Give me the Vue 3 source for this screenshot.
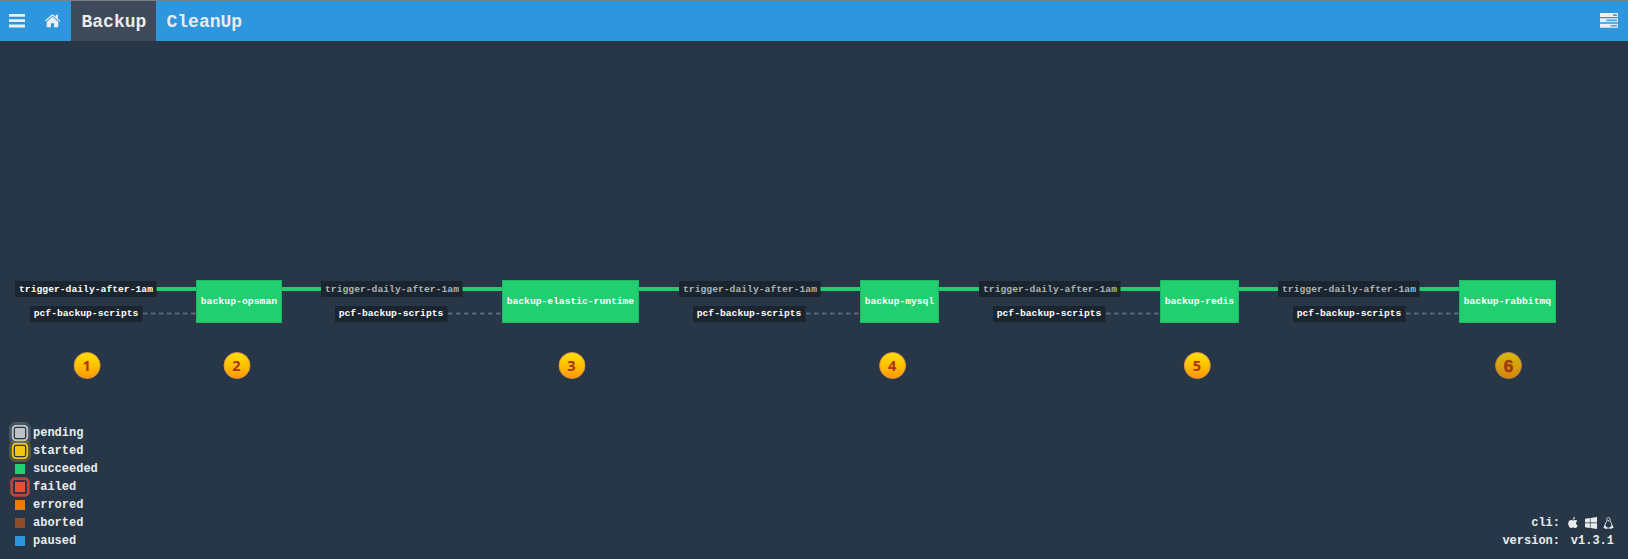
<script setup>
const jobs = [
  { name: 'backup-opsman', x: 196, w: 86, trig: 15, pcf: 30, badge: 87.3 },
  { name: 'backup-elastic-runtime', x: 502, w: 137, trig: 321, pcf: 335 },
  { name: 'backup-mysql', x: 860, w: 79, trig: 679, pcf: 693 },
  { name: 'backup-redis', x: 1160, w: 79, trig: 979, pcf: 993 },
  { name: 'backup-rabbitmq', x: 1459, w: 97, trig: 1278, pcf: 1293 },
]
const badges = [87.1, 237, 572, 892.6, 1197.3, 1508.5]
const statuses = [
  { name: 'pending', color: '#bdc3c7', ring: true },
  { name: 'started', color: '#f1c40f', ring: true },
  { name: 'succeeded', color: '#22cf70' },
  { name: 'failed', color: '#ee4c36', glow: true },
  { name: 'errored', color: '#e77e05' },
  { name: 'aborted', color: '#904d2b' },
  { name: 'paused', color: '#2e96dd' },
]
</script>

<template>
  <div class="page">
    <header class="bar">
      <button class="icon menu" aria-label="Menu">
        <svg width="16" height="14" viewBox="0 0 16 14"><path d="M0 0h16v2.8H0zM0 5.3h16v2.8H0zM0 10.6h16v2.8H0z" /></svg>
      </button>
      <a class="icon home">
        <svg width="17" height="14" viewBox="0 0 17 14">
          <path d="M8.5 2.8 2.7 7.7V12.4c0 .5.3.8.8.8h3.4V9.3h3.1v3.9h3.5c.5 0 .8-.3.8-.8V7.7z" />
          <path d="M16.3 6.7 13.9 4.7V.7h-2.2v2.1L9.3.8c-.5-.4-1.2-.4-1.7 0L.6 6.7l.8.9 7.1-5.9 7.1 5.9z" />
        </svg>
      </a>
      <a class="tab active">Backup</a>
      <a class="tab">CleanUp</a>
      <a class="icon groups">
        <svg width="18" height="15" viewBox="0 0 18 15">
          <path d="M0 0h18v4H0zM0 5.3h18v4H0zM0 10.7h18v4H0z" />
          <path class="slot" d="M13 1.2h4v1.7h-4zM6.5 6.5H17v1.7H6.5zM10.5 11.9H17v1.7h-6.5z" />
        </svg>
      </a>
    </header>

    <svg class="pipeline" width="1628" height="350" viewBox="0 41 1628 350">
      <defs>
        <linearGradient id="gold" x1="0" y1="0" x2="0" y2="1">
          <stop offset="0" stop-color="#ffe000" />
          <stop offset=".5" stop-color="#ffc000" />
          <stop offset="1" stop-color="#ff9500" />
        </linearGradient>
        <linearGradient id="dim" x1="0" y1="0" x2="0" y2="1">
          <stop offset="0" stop-color="#d7bd0c" />
          <stop offset="1" stop-color="#d5810f" />
        </linearGradient>
      </defs>
      <g v-for="(j, i) in jobs" :key="j.name">
        <path v-if="i" class="flow" :d="`M${jobs[i - 1].x + jobs[i - 1].w} 289H${j.trig}`" />
        <path class="flow" :d="`M${j.trig + 141} 289H${j.x}`" />
        <path class="idle" :d="`M${j.pcf + 112} 313.5H${j.x}`" />
        <rect class="resource" :x="j.trig" y="281" width="141.5" height="16" />
        <text :class="['label', { passed: i > 0 }]" :x="j.trig + 4" y="292" textLength="134">trigger-daily-after-1am</text>
        <rect class="resource" :x="j.pcf" y="306" width="112.5" height="16" />
        <text class="label" :x="j.pcf + 3.7" y="316" textLength="104.7">pcf-backup-scripts</text>
        <rect class="job" :x="j.x + .5" y="280.5" :width="j.w - 1" height="42" />
        <text class="label" :x="j.x + 4.7" y="304" :textLength="j.w - 9.5">{{ j.name }}</text>
      </g>
      <g v-for="(x, i) in badges" :key="x" :class="['badge', { last: i === 5 }]">
        <circle :cx="x" cy="365.5" r="13" />
        <text :x="i === 5 ? x : x - .5" :y="i === 5 ? 372 : 370.8">{{ i + 1 }}</text>
      </g>
    </svg>

    <footer class="foot">
      <ul class="legend">
        <li v-for="s in statuses" :key="s.name">
          <svg class="swatch" width="24" height="18" viewBox="-12 -9 24 18" fill="none" :stroke="s.color">
            <template v-if="s.ring">
              <rect x="-10" y="-10" width="20" height="20" rx="5.5" stroke-width="1.8" opacity=".25" />
              <rect x="-7.3" y="-7.3" width="14.6" height="14.6" rx="3.2" stroke-width="2" />
            </template>
            <rect v-if="s.glow" x="-8.4" y="-8.4" width="16.8" height="16.8" rx="3.5" stroke-width="2.8" opacity=".72" />
            <rect x="-5" y="-5" width="10" height="10" :rx="s.ring ? 1 : 0" :fill="s.color" stroke="none" />
          </svg>
          {{ s.name }}
        </li>
      </ul>
      <div class="info">
        <div class="row">
          <span>cli:</span>
          <span class="value">
            <svg width="10" height="12" viewBox="0 0 10 12"><path d="M6.9.1C7 1.4 6 2.7 4.8 2.8 4.7 1.5 5.8.3 6.9.1zM9.4 4C8.5 4.5 8 5.2 8 6.1c0 1.1.7 1.9 1.7 2.3-.4 1.2-1.4 2.7-2.4 2.7-.8 0-1.1-.5-2.1-.5s-1.3.5-2.1.5C1.7 11.1.2 8.6.2 6.6c0-2.2 1.4-3.5 2.9-3.5.9 0 1.5.5 2.1.5.5 0 1.3-.6 2.3-.6.8 0 1.5.4 1.9 1z" /></svg>
            <svg width="12" height="12" viewBox="0 0 12 12"><path d="M0 1.7 4.9 1v4.6H0zM5.5.9 12 0v5.6H5.5zM0 6.2h4.9v4.7L0 10.2zM5.5 6.2H12v5.7L5.5 11z" /></svg>
            <svg width="11" height="12" viewBox="0 0 11 12">
              <path class="outline" d="M3.9 3.5C3.7 1.5 4.2.6 5.4.6s1.8.9 1.7 2.8c0 1.4 1.9 2.7 1.9 5.2 0 1.7-1.1 2.5-3.7 2.5S1.9 10.3 1.9 8.6c0-2.3 2.1-3.7 2-5.1z" />
              <path d="M1.8 8.1 4.4 10.8 3.7 12 .4 11zM9.1 8.1 10.7 10.7 7.2 12 6.6 10.7zM4.2 3.2h2.5L5.4 4.7z" />
            </svg>
          </span>
        </div>
        <div class="row"><span>version:</span><span class="value text">v1.3.1</span></div>
      </div>
    </footer>
  </div>
</template>

<style>
body { background: #273747; overflow: hidden; }
</style>

<style scoped>
.page {
  width: 1628px;
  height: 559px;
  display: flex;
  flex-direction: column;
  background: #273747;
  color: #e9eced;
  font: bold 12px "Liberation Mono", "Courier New", monospace;
}
.bar {
  height: 41px;
  box-sizing: border-box;
  border-top: 1px solid #7b8085;
  background: #2e96dd;
  display: flex;
  flex: none;
}
.icon {
  display: flex;
  align-items: center;
  padding: 0;
  border: 0;
  background: none;
}
.icon svg { fill: #e9eff3; }
.menu { width: 44px; padding-left: 9px; box-sizing: border-box; }
.home { width: 27px; }
.groups { margin-left: auto; padding: 0 10px 2px 0; }
.groups .slot { fill: #4ca2dc; }
.tab { padding: 2px 9.5px 0 10.5px; font-size: 18px; line-height: 39px; height: 38px; }
.active { background: #3e4a59; width: 65px; }
.pipeline { display: block; flex: none; }
.flow { stroke: #22cf70; stroke-width: 4; fill: none; }
.idle { stroke: #5b6a7b; stroke-width: 1.8; stroke-dasharray: 4.5 3.5; stroke-dashoffset: -1; fill: none; }
.resource { fill: #1b252f; }
.job { fill: #22cf70; stroke: #20b866; }
.label { fill: #fff; font-size: 9.7px; }
.passed { fill: #aab4b8; }
.badge circle { fill: url(#gold); stroke: #d99349; stroke-width: .9; }
.badge text {
  fill: #aa3510;
  font: bold 14.5px "Open Sans", "Noto Sans", sans-serif;
  text-anchor: middle;
}
.last circle { fill: url(#dim); stroke: #bf8443; }
.last text { fill: #9f3a0e; stroke: #9f3a0e; stroke-width: .6; font: bold 17px "Liberation Sans", sans-serif; }
.foot {
  flex: 1;
  display: flex;
  justify-content: space-between;
  align-items: flex-end;
  padding: 0 14px 9px 8px;
}
.legend { list-style: none; margin: 0; padding: 0; }
.legend li { height: 18px; display: flex; align-items: center; gap: 1px; line-height: 20px; }
.swatch { overflow: visible; flex: none; }
.row { display: flex; justify-content: flex-end; height: 18px; line-height: 18px; }
.value { width: 46px; margin-left: 8px; display: flex; align-items: center; justify-content: space-between; }
.value.text { justify-content: flex-end; }
.value svg { fill: #e9eced; }
.value .outline { fill: none; stroke: #e9eced; stroke-width: .9; }
</style>
